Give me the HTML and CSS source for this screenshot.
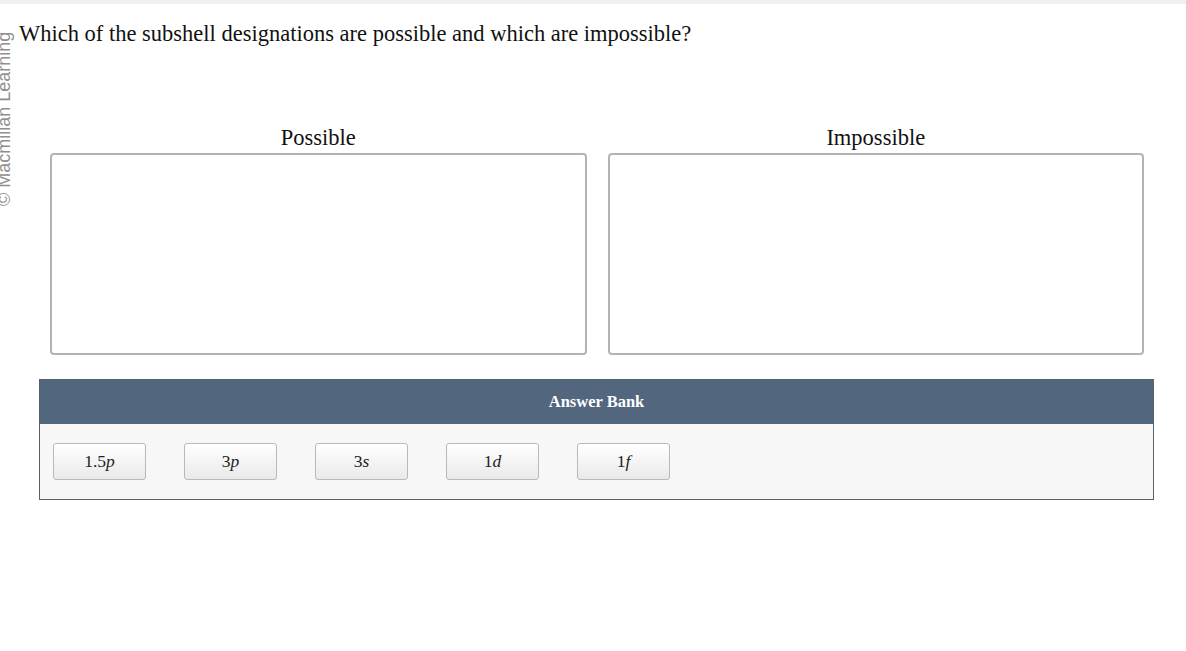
FILE: index.html
```html
<!DOCTYPE html>
<html>
<head>
<meta charset="utf-8">
<link rel="stylesheet" href="styles.css">
</head>
<body>
<div class="topbar"></div>
<div class="credit">© Macmillan Learning</div>
<main class="page">
  <p class="question">Which of the subshell designations are possible and which are impossible?</p>
  <div class="bins">
    <div class="bin">
      <div class="bin-label">Possible</div>
      <div class="bin-box"></div>
    </div>
    <div class="bin">
      <div class="bin-label">Impossible</div>
      <div class="bin-box"></div>
    </div>
  </div>
  <section class="bank">
    <div class="bank-head">Answer Bank</div>
    <div class="bank-body">
      <div class="chip">1.5<i>p</i></div>
      <div class="chip">3<i>p</i></div>
      <div class="chip">3<i>s</i></div>
      <div class="chip">1<i>d</i></div>
      <div class="chip">1<i>f</i></div>
    </div>
  </section>
</main>
</body>
</html>
```
FILE: styles.css
```css
html, body {
  margin: 0;
  padding: 0;
  background: #fff;
  font-family: "Liberation Serif", "Times New Roman", serif;
  color: #111;
}
.topbar {
  height: 4px;
  background: #f0f0f0;
}
.credit {
  position: absolute;
  left: -4px;
  top: 206px;
  transform-origin: 0 0;
  transform: rotate(-90deg);
  font-family: "Liberation Sans", Arial, sans-serif;
  font-size: 18px;
  line-height: 16px;
  color: #8f8f8f;
  white-space: nowrap;
}
.page {
  padding: 0 0 0 19px;
}
.question {
  margin: 0;
  padding-top: 17px;
  font-size: 22.5px;
  line-height: 26px;
}
.bins {
  display: flex;
  gap: 21px;
  margin: 78px 0 0 31px;
  width: 1094px;
}
.bin {
  flex: 1;
  display: flex;
  flex-direction: column;
}
.bin-label {
  text-align: center;
  font-size: 22.5px;
  line-height: 26px;
  margin-bottom: 2px;
}
.bin-box {
  height: 198px;
  border: 2px solid #b3b3b3;
  border-radius: 4px;
  background: #fff;
}
.bank {
  margin: 24px 0 0 20px;
  width: 1113px;
  border: 1px solid #56626e;
}
.bank-head {
  height: 44px;
  background: #52667e;
  color: #fff;
  font-weight: bold;
  font-size: 16.5px;
  display: flex;
  align-items: center;
  justify-content: center;
}
.bank-body {
  background: #f7f7f7;
  display: flex;
  gap: 38px;
  padding: 19px 13px 19px 13px;
}
.chip {
  width: 91px;
  height: 35px;
  border: 1px solid #b9b9b9;
  border-radius: 3px;
  background: linear-gradient(#ffffff, #e9e9e9);
  display: flex;
  align-items: center;
  justify-content: center;
  font-size: 17.5px;
  color: #222;
}
.chip i {
  font-style: italic;
}
```
